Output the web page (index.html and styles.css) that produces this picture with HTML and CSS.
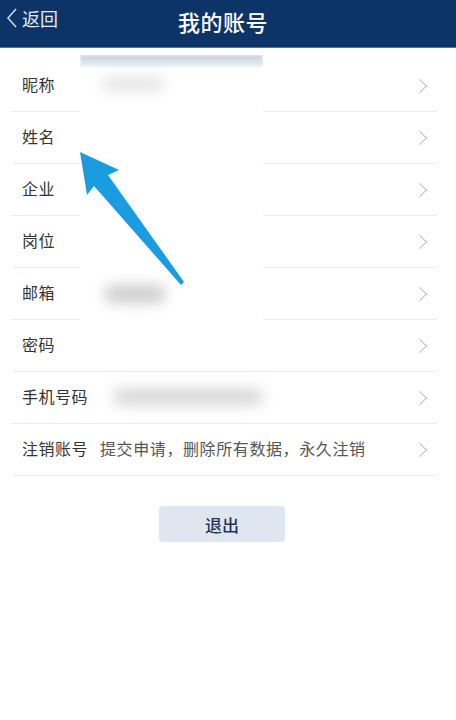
FILE: index.html
```html
<!DOCTYPE html>
<html lang="zh-CN">
<head>
    <meta charset="UTF-8">
    <meta name="viewport" content="width=device-width, initial-scale=1.0">
    <title>我的账号</title>
    <link rel="stylesheet" href="styles.css">
</head>
<body>
    <div class="header">
        <div class="back">
            <svg width="12" height="22" viewBox="0 0 12 22"><path d="M10 2 L2 11 L10 20" fill="none" stroke="#c9d3e2" stroke-width="1.6"/></svg>
            <span>返回</span>
        </div>
        <h1>我的账号</h1>
    </div>

    <div class="list">
        <div class="row"><span class="label">昵称</span><span class="chev"></span></div>
        <div class="row"><span class="label">姓名</span><span class="chev"></span></div>
        <div class="row"><span class="label">企业</span><span class="chev"></span></div>
        <div class="row"><span class="label">岗位</span><span class="chev"></span></div>
        <div class="row"><span class="label">邮箱</span><span class="chev"></span></div>
        <div class="row"><span class="label">密码</span><span class="chev"></span></div>
        <div class="row"><span class="label">手机号码</span><span class="chev"></span></div>
        <div class="row"><span class="label">注销账号</span><span class="desc">提交申请，删除所有数据，永久注销</span><span class="chev"></span></div>

        <!-- blurred cover over private values -->
        <div class="mask">
            <div class="mask-top"></div>
            <div class="blob blob-nick"></div>
            <div class="blob blob-mail"></div>
        </div>
        <div class="mask-phone">
            <div class="blob blob-phone"></div>
        </div>
    </div>

    <div class="actions">
        <button class="logout">退出</button>
    </div>

    <svg class="arrow" width="116" height="142" viewBox="0 0 116 142">
        <polygon points="4,4 43,22 32,27 108,134 105,137 18,38 11,47" fill="#1b9ce0"/>
    </svg>
</body>
</html>
```

FILE: styles.css
```css
body {
    margin: 0;
    padding: 0;
    background-color: #fff;
    font-family: "Noto Sans CJK SC", "Noto Sans", sans-serif;
    position: relative;
    min-height: 720px;
}

.header {
    height: 47px;
    background-color: #0d3466;
    color: #fff;
    display: flex;
    align-items: center;
    justify-content: center;
    position: relative;
    border-bottom: 1px solid #5d6f88;
}

.header h1 {
    margin: 0;
    font-size: 22px;
    font-weight: 500;
    letter-spacing: 0.5px;
    margin-top: -6px;
    margin-right: 10px;
}

.back {
    position: absolute;
    left: 6px;
    top: 5px;
    display: flex;
    align-items: center;
    gap: 4px;
    color: #e6ebf2;
    font-size: 18px;
}

.list {
    margin-top: 12px;
    position: relative;
}

.row {
    height: 51px;
    margin: 0 19px 0 12px;
    border-bottom: 1px solid #ececec;
    display: flex;
    align-items: center;
    padding-left: 10px;
    padding-right: 12px;
}

.label {
    font-size: 16px;
    letter-spacing: 0.5px;
    color: #333;
    margin-top: -3px;
}

.desc {
    margin-left: 12px;
    margin-top: -3px;
    font-size: 16px;
    letter-spacing: 0.6px;
    color: #555;
}

.chev {
    margin-left: auto;
    width: 9px;
    height: 9px;
    border-top: 1px solid #bdbdbd;
    border-right: 1px solid #bdbdbd;
    transform: rotate(45deg);
}

.mask {
    position: absolute;
    left: 80px;
    top: -5px;
    width: 183px;
    height: 314px;
    background: #fff;
    overflow: hidden;
}

.mask-top {
    height: 12px;
    background: linear-gradient(#c6cfdb, #eef1f5);
    filter: blur(1.5px);
}

.mask-phone {
    position: absolute;
    left: 93px;
    top: 312px;
    width: 184px;
    height: 49px;
    background: #fff;
    overflow: hidden;
}

.blob {
    position: absolute;
    background: #d2d2d2;
    border-radius: 10px;
    filter: blur(7px);
}

.blob-nick {
    left: 22px;
    top: 22px;
    width: 62px;
    height: 14px;
    background: #e4e4e4;
}

.blob-mail {
    left: 24px;
    top: 230px;
    width: 62px;
    height: 18px;
    background: #cdcdcd;
}

.blob-phone {
    left: 20px;
    top: 17px;
    width: 150px;
    height: 16px;
    background: #d6d6d6;
}

.actions {
    display: flex;
    justify-content: center;
    margin-top: 30px;
    padding-right: 12px;
}

.logout {
    width: 126px;
    height: 36px;
    border: none;
    border-radius: 4px;
    background-color: #dfe6ef;
    color: #1e3556;
    font-size: 17px;
    font-family: "Noto Sans CJK SC", sans-serif;
    font-weight: 500;
}

.arrow {
    position: absolute;
    left: 76px;
    top: 148px;
}
```
